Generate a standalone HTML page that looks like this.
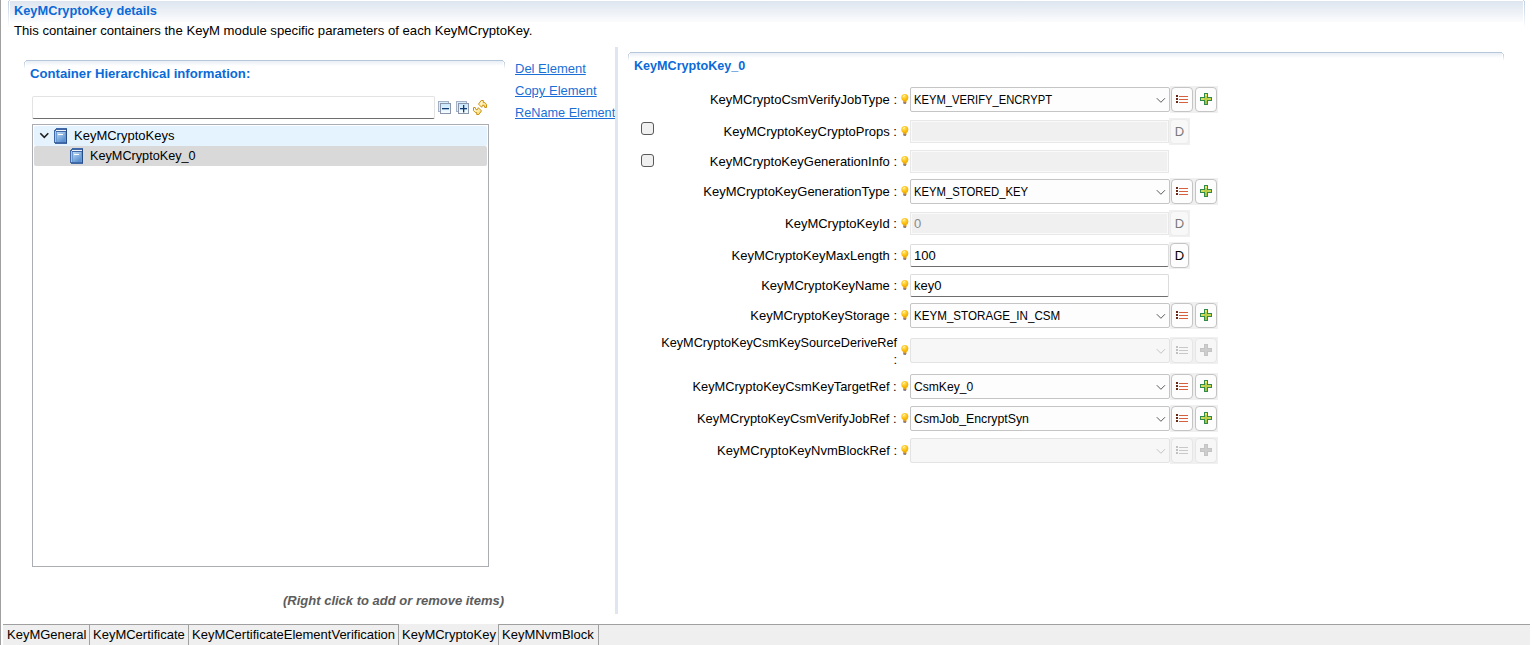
<!DOCTYPE html>
<html><head><meta charset="utf-8">
<style>
html,body{margin:0;padding:0;}
body{width:1532px;height:645px;position:relative;overflow:hidden;background:#fff;font-family:"Liberation Sans",sans-serif;font-size:13px;color:#000;}
.a{position:absolute;}
.a svg{display:block;}
.t{position:absolute;white-space:nowrap;line-height:16px;height:16px;}
.b{font-weight:bold;color:#0a6ad8;}
.lnk{color:#1a6fd6;text-decoration:underline;}
</style></head>
<body>

<div class="a" style="left:0;top:0;width:1px;height:645px;background:#a0a0a0"></div>
<div class="a" style="left:9px;top:0;width:1px;height:1px;background:#c8d4e2"></div>
<div class="a" style="left:1523px;top:0;width:1px;height:1px;background:#c8d4e2"></div>
<div class="a" style="left:8px;top:1px;width:1px;height:27px;background:linear-gradient(#c0cfe0,rgba(255,255,255,0))"></div>
<div class="a" style="left:1524px;top:1px;width:1px;height:27px;background:linear-gradient(#c0cfe0,rgba(255,255,255,0))"></div>
<div class="a" style="left:10px;top:1px;width:1513px;height:21px;background:linear-gradient(#dee5ef,#fbfcfd)"></div>
<div class="t b" style="left:14px;top:3px;font-size:12.8px">KeyMCryptoKey details</div>
<div class="t" style="left:14px;top:23px;font-size:13.15px">This container containers the KeyM module specific parameters of each KeyMCryptoKey.</div>
<div class="a" style="left:26px;top:60px;width:477px;height:1px;background:#b6c7db"></div>
<div class="a" style="left:25px;top:61px;width:1px;height:1px;background:#c4d2e2"></div>
<div class="a" style="left:503px;top:61px;width:1px;height:1px;background:#c4d2e2"></div>
<div class="a" style="left:24px;top:62px;width:1px;height:7px;background:linear-gradient(#bccbdd,rgba(255,255,255,0))"></div>
<div class="a" style="left:504px;top:62px;width:1px;height:7px;background:linear-gradient(#bccbdd,rgba(255,255,255,0))"></div>
<div class="a" style="left:26px;top:61px;width:477px;height:5px;background:linear-gradient(#e9eef5,#fff)"></div>
<div class="t b" style="left:30px;top:66px;font-size:13.13px">Container Hierarchical information:</div>
<div class="a" style="left:32px;top:96px;width:401px;height:21px;border:1px solid #e3e3e3;border-bottom:1px solid #6e6e6e;border-radius:2px;"></div>
<div class="a" style="left:438px;top:101px;width:14px;height:14px"><svg width="14" height="14" viewBox="0 0 14 14"><defs><linearGradient id="cg" x1="0" y1="0" x2="0" y2="1"><stop offset="0" stop-color="#c4e6fc"/><stop offset="1" stop-color="#fafdff"/></linearGradient></defs><rect x="0.5" y="0.5" width="10" height="10" fill="#d8eefc" stroke="#a4b0c4"/><rect x="2.5" y="2.5" width="10" height="10" fill="url(#cg)" stroke="#8a96aa"/><rect x="4" y="7" width="7" height="1.3" fill="#0f3c74"/></svg></div>
<div class="a" style="left:456px;top:101px;width:14px;height:14px"><svg width="14" height="14" viewBox="0 0 14 14"><defs><linearGradient id="cg" x1="0" y1="0" x2="0" y2="1"><stop offset="0" stop-color="#c4e6fc"/><stop offset="1" stop-color="#fafdff"/></linearGradient></defs><rect x="0.5" y="0.5" width="10" height="10" fill="#d8eefc" stroke="#a4b0c4"/><rect x="2.5" y="2.5" width="10" height="10" fill="url(#cg)" stroke="#8a96aa"/><rect x="4" y="7" width="7" height="1.3" fill="#0f3c74"/><rect x="7" y="4" width="1.3" height="7.5" fill="#0f3c74"/></svg></div>
<div class="a" style="left:472px;top:99px;width:16px;height:17px"><svg width="16" height="17" viewBox="0 0 16 17"><defs><linearGradient id="sg" x1="0" y1="0" x2="1" y2="1"><stop offset="0" stop-color="#ffffff"/><stop offset="0.5" stop-color="#fdf0b0"/><stop offset="1" stop-color="#f4cc50"/></linearGradient></defs><path d="M9.2 1.5 L11.3 1.5 L11.3 3.6 L12.8 3.6 L14.5 5.4 L14.5 8.5 L12.8 8.5 L12 6.3 L10.6 6.3 L9.7 8.3 L6.5 5.1 Z" fill="url(#sg)" stroke="#cc9010" stroke-width="1" stroke-linejoin="miter"/><path d="M6.8 15.5 L4.7 15.5 L4.7 13.4 L3.2 13.4 L1.5 11.6 L1.5 8.5 L3.2 8.5 L4 10.7 L5.4 10.7 L6.3 8.7 L9.5 11.9 Z" fill="url(#sg)" stroke="#cc9010" stroke-width="1" stroke-linejoin="miter"/></svg></div>
<div class="a" style="left:32px;top:124px;width:455px;height:441px;border:1px solid #abadb3;"></div>
<div class="a" style="left:34px;top:126px;width:453px;height:20px;background:#e5f3ff;border-radius:2px"></div>
<div class="a" style="left:34px;top:146px;width:453px;height:20px;background:#d9d9d9;border-radius:2px"></div>
<div class="a" style="left:39px;top:132px;width:11px;height:7px"><svg width="11" height="7" viewBox="0 0 11 7"><path d="M1.3 1.3 L5.3 5.3 L9.3 1.3" fill="none" stroke="#202020" stroke-width="1.6"/></svg></div>
<div class="a" style="left:54px;top:128px;width:14px;height:17px"><svg width="14" height="17" viewBox="0 0 14 17" shape-rendering="crispEdges"><defs><linearGradient id="bk" x1="0" y1="0" x2="0.6" y2="1"><stop offset="0" stop-color="#bcdaf4"/><stop offset="1" stop-color="#5a90d0"/></linearGradient></defs><path d="M2 0 H13 V15 L12 16 H1 L0 15 V2 Z" fill="#4068a6"/><rect x="2" y="2" width="10" height="1" fill="#eef4fa"/><rect x="1" y="3" width="1" height="11" fill="#a4c6ea"/><rect x="2" y="4" width="10" height="10" fill="#6a98d0"/><rect x="3" y="4" width="8" height="10" fill="url(#bk)"/><rect x="4" y="6" width="5" height="1" fill="#ffffff"/><rect x="12" y="1" width="1" height="14" fill="#2a4c84"/></svg></div>
<div class="a" style="left:70px;top:148px;width:14px;height:17px"><svg width="14" height="17" viewBox="0 0 14 17" shape-rendering="crispEdges"><defs><linearGradient id="bk" x1="0" y1="0" x2="0.6" y2="1"><stop offset="0" stop-color="#bcdaf4"/><stop offset="1" stop-color="#5a90d0"/></linearGradient></defs><path d="M2 0 H13 V15 L12 16 H1 L0 15 V2 Z" fill="#4068a6"/><rect x="2" y="2" width="10" height="1" fill="#eef4fa"/><rect x="1" y="3" width="1" height="11" fill="#a4c6ea"/><rect x="2" y="4" width="10" height="10" fill="#6a98d0"/><rect x="3" y="4" width="8" height="10" fill="url(#bk)"/><rect x="4" y="6" width="5" height="1" fill="#ffffff"/><rect x="12" y="1" width="1" height="14" fill="#2a4c84"/></svg></div>
<div class="t" style="left:74px;top:128px">KeyMCryptoKeys</div>
<div class="t" style="left:90px;top:148px;transform:scaleX(0.975);transform-origin:left">KeyMCryptoKey_0</div>
<div class="t lnk" style="left:515px;top:61px">Del Element</div>
<div class="t lnk" style="left:515px;top:83px">Copy Element</div>
<div class="a" style="left:515px;top:105px;width:100px;height:17px;overflow:hidden"><div class="t lnk" style="left:0;top:0;font-size:12.9px;transform:scaleX(0.985);transform-origin:left">ReName Element</div></div>
<div class="a" style="left:615px;top:47px;width:3px;height:567px;background:#dfe6f0"></div>
<div class="a" style="left:630px;top:52px;width:872px;height:1px;background:#b6c7db"></div>
<div class="a" style="left:629px;top:53px;width:1px;height:1px;background:#c4d2e2"></div>
<div class="a" style="left:1502px;top:53px;width:1px;height:1px;background:#c4d2e2"></div>
<div class="a" style="left:628px;top:54px;width:1px;height:7px;background:linear-gradient(#bccbdd,rgba(255,255,255,0))"></div>
<div class="a" style="left:1503px;top:54px;width:1px;height:7px;background:linear-gradient(#bccbdd,rgba(255,255,255,0))"></div>
<div class="a" style="left:630px;top:53px;width:872px;height:5px;background:linear-gradient(#e9eef5,#fff)"></div>
<div class="t b" style="left:634px;top:58px;font-size:12.6px">KeyMCryptoKey_0</div>
<div class="t" style="right:635px;top:92px">KeyMCryptoCsmVerifyJobType :</div>
<div class="a" style="left:901px;top:93px;width:9px;height:12px"><svg width="9" height="12" viewBox="0 0 9 12"><defs><radialGradient id="bg" cx="0.4" cy="0.35" r="0.7"><stop offset="0" stop-color="#ffe680"/><stop offset="0.5" stop-color="#ffc81e"/><stop offset="1" stop-color="#f0a800"/></radialGradient></defs><circle cx="3.8" cy="4.4" r="3.5" fill="url(#bg)"/><rect x="2.1" y="7" width="3.4" height="1.8" fill="#f0b000"/><rect x="2.2" y="8.6" width="3.2" height="1.6" fill="#b47a40"/><rect x="2.6" y="10.1" width="2.4" height="0.9" fill="#7a8090"/><path d="M2.3 3.8 L3.3 2.5" stroke="#fff8d0" stroke-width="0.9" stroke-linecap="round"/></svg></div>
<div class="a" style="left:910px;top:87px;width:258px;height:23px;border:1px solid #c5c5c5;border-radius:2px;background:#fdfdfd"></div>
<div class="t" style="left:914px;top:92px;transform:scaleX(0.862);transform-origin:left">KEYM_VERIFY_ENCRYPT</div>
<div class="a" style="left:1156px;top:97px;width:10px;height:7px"><svg width="10" height="7" viewBox="0 0 10 7"><path d="M0.8 1.2 L4.9 5.3 L9 1.2" fill="none" stroke="#505050" stroke-width="0.95"/></svg></div>
<div class="a" style="left:1170px;top:86px;width:48px;height:27px;background:#f0f0f0"></div>
<div class="a" style="left:1171px;top:87px;width:20px;height:23px;border:1px solid #c4c4c4;border-radius:4px;background:#fdfdfd"></div>
<div class="a" style="left:1195px;top:87px;width:20px;height:23px;border:1px solid #c4c4c4;border-radius:4px;background:#fdfdfd"></div>
<div class="a" style="left:1176px;top:95px;width:14px;height:10px"><svg width="14" height="10" viewBox="0 0 14 10"><rect x="0" y="0" width="2" height="2" fill="#6b2511"/><rect x="0" y="3" width="2" height="2" fill="#6b2511"/><rect x="0" y="6" width="2" height="2" fill="#6b2511"/><rect x="3" y="1" width="9" height="1" fill="#d4603e"/><rect x="3" y="4" width="9" height="1" fill="#d4603e"/><rect x="3" y="7" width="9" height="1" fill="#d4603e"/></svg></div>
<div class="a" style="left:1200px;top:93px;width:12px;height:12px"><svg width="12" height="12" viewBox="0 0 12 12" shape-rendering="crispEdges"><path d="M4 0 H8 V4 H12 V8 H8 V12 H4 V8 H0 V4 H4 Z" fill="#328a4a"/><path d="M5 1 H7 V5 H11 V7 H7 V11 H5 V7 H1 V5 H5 Z" fill="#b9cf4a"/><rect x="5" y="1" width="2" height="2" fill="#ece65c"/><rect x="1" y="5" width="3" height="2" fill="#d8dc58"/><rect x="8" y="5" width="3" height="2" fill="#c8d650"/><rect x="5" y="8" width="2" height="3" fill="#a4c244"/></svg></div>
<div class="a" style="left:641px;top:122px;width:11px;height:11px;border:1px solid #5a5a5a;border-radius:3px;background:#f0f0f0"></div>
<div class="t" style="right:635px;top:124px">KeyMCryptoKeyCryptoProps :</div>
<div class="a" style="left:901px;top:125px;width:9px;height:12px"><svg width="9" height="12" viewBox="0 0 9 12"><defs><radialGradient id="bg" cx="0.4" cy="0.35" r="0.7"><stop offset="0" stop-color="#ffe680"/><stop offset="0.5" stop-color="#ffc81e"/><stop offset="1" stop-color="#f0a800"/></radialGradient></defs><circle cx="3.8" cy="4.4" r="3.5" fill="url(#bg)"/><rect x="2.1" y="7" width="3.4" height="1.8" fill="#f0b000"/><rect x="2.2" y="8.6" width="3.2" height="1.6" fill="#b47a40"/><rect x="2.6" y="10.1" width="2.4" height="0.9" fill="#7a8090"/><path d="M2.3 3.8 L3.3 2.5" stroke="#fff8d0" stroke-width="0.9" stroke-linecap="round"/></svg></div>
<div class="a" style="left:910px;top:120px;width:257px;height:21px;border:1px solid #e8e8e8;background:#f0f0f0;box-shadow:inset 0 0 0 1px #fafafa"></div>
<div class="a" style="left:1169px;top:118px;width:21px;height:27px;background:#f0f0f0"></div>
<div class="a" style="left:1170px;top:119px;width:17px;height:23px;border:1px solid #ececec;border-radius:4px;background:#f8f8f8"></div>
<div class="t" style="left:1170px;width:19px;text-align:center;top:124px;color:#7a7a7a">D</div>
<div class="a" style="left:641px;top:154px;width:11px;height:11px;border:1px solid #5a5a5a;border-radius:3px;background:#f0f0f0"></div>
<div class="t" style="right:635px;top:154px">KeyMCryptoKeyGenerationInfo :</div>
<div class="a" style="left:901px;top:155px;width:9px;height:12px"><svg width="9" height="12" viewBox="0 0 9 12"><defs><radialGradient id="bg" cx="0.4" cy="0.35" r="0.7"><stop offset="0" stop-color="#ffe680"/><stop offset="0.5" stop-color="#ffc81e"/><stop offset="1" stop-color="#f0a800"/></radialGradient></defs><circle cx="3.8" cy="4.4" r="3.5" fill="url(#bg)"/><rect x="2.1" y="7" width="3.4" height="1.8" fill="#f0b000"/><rect x="2.2" y="8.6" width="3.2" height="1.6" fill="#b47a40"/><rect x="2.6" y="10.1" width="2.4" height="0.9" fill="#7a8090"/><path d="M2.3 3.8 L3.3 2.5" stroke="#fff8d0" stroke-width="0.9" stroke-linecap="round"/></svg></div>
<div class="a" style="left:910px;top:150px;width:257px;height:21px;border:1px solid #e8e8e8;background:#f0f0f0;box-shadow:inset 0 0 0 1px #fafafa"></div>
<div class="t" style="right:635px;top:184px">KeyMCryptoKeyGenerationType :</div>
<div class="a" style="left:901px;top:185px;width:9px;height:12px"><svg width="9" height="12" viewBox="0 0 9 12"><defs><radialGradient id="bg" cx="0.4" cy="0.35" r="0.7"><stop offset="0" stop-color="#ffe680"/><stop offset="0.5" stop-color="#ffc81e"/><stop offset="1" stop-color="#f0a800"/></radialGradient></defs><circle cx="3.8" cy="4.4" r="3.5" fill="url(#bg)"/><rect x="2.1" y="7" width="3.4" height="1.8" fill="#f0b000"/><rect x="2.2" y="8.6" width="3.2" height="1.6" fill="#b47a40"/><rect x="2.6" y="10.1" width="2.4" height="0.9" fill="#7a8090"/><path d="M2.3 3.8 L3.3 2.5" stroke="#fff8d0" stroke-width="0.9" stroke-linecap="round"/></svg></div>
<div class="a" style="left:910px;top:179px;width:258px;height:23px;border:1px solid #c5c5c5;border-radius:2px;background:#fdfdfd"></div>
<div class="t" style="left:914px;top:184px;transform:scaleX(0.869);transform-origin:left">KEYM_STORED_KEY</div>
<div class="a" style="left:1156px;top:189px;width:10px;height:7px"><svg width="10" height="7" viewBox="0 0 10 7"><path d="M0.8 1.2 L4.9 5.3 L9 1.2" fill="none" stroke="#505050" stroke-width="0.95"/></svg></div>
<div class="a" style="left:1170px;top:178px;width:48px;height:27px;background:#f0f0f0"></div>
<div class="a" style="left:1171px;top:179px;width:20px;height:23px;border:1px solid #c4c4c4;border-radius:4px;background:#fdfdfd"></div>
<div class="a" style="left:1195px;top:179px;width:20px;height:23px;border:1px solid #c4c4c4;border-radius:4px;background:#fdfdfd"></div>
<div class="a" style="left:1176px;top:187px;width:14px;height:10px"><svg width="14" height="10" viewBox="0 0 14 10"><rect x="0" y="0" width="2" height="2" fill="#6b2511"/><rect x="0" y="3" width="2" height="2" fill="#6b2511"/><rect x="0" y="6" width="2" height="2" fill="#6b2511"/><rect x="3" y="1" width="9" height="1" fill="#d4603e"/><rect x="3" y="4" width="9" height="1" fill="#d4603e"/><rect x="3" y="7" width="9" height="1" fill="#d4603e"/></svg></div>
<div class="a" style="left:1200px;top:185px;width:12px;height:12px"><svg width="12" height="12" viewBox="0 0 12 12" shape-rendering="crispEdges"><path d="M4 0 H8 V4 H12 V8 H8 V12 H4 V8 H0 V4 H4 Z" fill="#328a4a"/><path d="M5 1 H7 V5 H11 V7 H7 V11 H5 V7 H1 V5 H5 Z" fill="#b9cf4a"/><rect x="5" y="1" width="2" height="2" fill="#ece65c"/><rect x="1" y="5" width="3" height="2" fill="#d8dc58"/><rect x="8" y="5" width="3" height="2" fill="#c8d650"/><rect x="5" y="8" width="2" height="3" fill="#a4c244"/></svg></div>
<div class="t" style="right:635px;top:216px">KeyMCryptoKeyId :</div>
<div class="a" style="left:901px;top:217px;width:9px;height:12px"><svg width="9" height="12" viewBox="0 0 9 12"><defs><radialGradient id="bg" cx="0.4" cy="0.35" r="0.7"><stop offset="0" stop-color="#ffe680"/><stop offset="0.5" stop-color="#ffc81e"/><stop offset="1" stop-color="#f0a800"/></radialGradient></defs><circle cx="3.8" cy="4.4" r="3.5" fill="url(#bg)"/><rect x="2.1" y="7" width="3.4" height="1.8" fill="#f0b000"/><rect x="2.2" y="8.6" width="3.2" height="1.6" fill="#b47a40"/><rect x="2.6" y="10.1" width="2.4" height="0.9" fill="#7a8090"/><path d="M2.3 3.8 L3.3 2.5" stroke="#fff8d0" stroke-width="0.9" stroke-linecap="round"/></svg></div>
<div class="a" style="left:910px;top:212px;width:257px;height:21px;border:1px solid #e8e8e8;background:#f0f0f0;box-shadow:inset 0 0 0 1px #fafafa"></div>
<div class="t" style="left:914px;top:216px;color:#8a8a8a">0</div>
<div class="a" style="left:1169px;top:210px;width:21px;height:27px;background:#f0f0f0"></div>
<div class="a" style="left:1170px;top:211px;width:17px;height:23px;border:1px solid #ececec;border-radius:4px;background:#f8f8f8"></div>
<div class="t" style="left:1170px;width:19px;text-align:center;top:216px;color:#7a7a7a">D</div>
<div class="t" style="right:635px;top:248px">KeyMCryptoKeyMaxLength :</div>
<div class="a" style="left:901px;top:249px;width:9px;height:12px"><svg width="9" height="12" viewBox="0 0 9 12"><defs><radialGradient id="bg" cx="0.4" cy="0.35" r="0.7"><stop offset="0" stop-color="#ffe680"/><stop offset="0.5" stop-color="#ffc81e"/><stop offset="1" stop-color="#f0a800"/></radialGradient></defs><circle cx="3.8" cy="4.4" r="3.5" fill="url(#bg)"/><rect x="2.1" y="7" width="3.4" height="1.8" fill="#f0b000"/><rect x="2.2" y="8.6" width="3.2" height="1.6" fill="#b47a40"/><rect x="2.6" y="10.1" width="2.4" height="0.9" fill="#7a8090"/><path d="M2.3 3.8 L3.3 2.5" stroke="#fff8d0" stroke-width="0.9" stroke-linecap="round"/></svg></div>
<div class="a" style="left:910px;top:244px;width:257px;height:21px;border:1px solid #dcdcdc;border-bottom-color:#6e6e6e;border-radius:2px;background:#fff"></div>
<div class="t" style="left:914px;top:248px;color:#000">100</div>
<div class="a" style="left:1169px;top:242px;width:21px;height:27px;background:#f0f0f0"></div>
<div class="a" style="left:1170px;top:243px;width:17px;height:23px;border:1px solid #c4c4c4;border-radius:4px;background:#fdfdfd"></div>
<div class="t" style="left:1170px;width:19px;text-align:center;top:248px">D</div>
<div class="t" style="right:635px;top:278px">KeyMCryptoKeyName :</div>
<div class="a" style="left:901px;top:279px;width:9px;height:12px"><svg width="9" height="12" viewBox="0 0 9 12"><defs><radialGradient id="bg" cx="0.4" cy="0.35" r="0.7"><stop offset="0" stop-color="#ffe680"/><stop offset="0.5" stop-color="#ffc81e"/><stop offset="1" stop-color="#f0a800"/></radialGradient></defs><circle cx="3.8" cy="4.4" r="3.5" fill="url(#bg)"/><rect x="2.1" y="7" width="3.4" height="1.8" fill="#f0b000"/><rect x="2.2" y="8.6" width="3.2" height="1.6" fill="#b47a40"/><rect x="2.6" y="10.1" width="2.4" height="0.9" fill="#7a8090"/><path d="M2.3 3.8 L3.3 2.5" stroke="#fff8d0" stroke-width="0.9" stroke-linecap="round"/></svg></div>
<div class="a" style="left:910px;top:274px;width:257px;height:21px;border:1px solid #dcdcdc;border-bottom-color:#6e6e6e;border-radius:2px;background:#fff"></div>
<div class="t" style="left:914px;top:278px;color:#000">key0</div>
<div class="t" style="right:635px;top:308px">KeyMCryptoKeyStorage :</div>
<div class="a" style="left:901px;top:309px;width:9px;height:12px"><svg width="9" height="12" viewBox="0 0 9 12"><defs><radialGradient id="bg" cx="0.4" cy="0.35" r="0.7"><stop offset="0" stop-color="#ffe680"/><stop offset="0.5" stop-color="#ffc81e"/><stop offset="1" stop-color="#f0a800"/></radialGradient></defs><circle cx="3.8" cy="4.4" r="3.5" fill="url(#bg)"/><rect x="2.1" y="7" width="3.4" height="1.8" fill="#f0b000"/><rect x="2.2" y="8.6" width="3.2" height="1.6" fill="#b47a40"/><rect x="2.6" y="10.1" width="2.4" height="0.9" fill="#7a8090"/><path d="M2.3 3.8 L3.3 2.5" stroke="#fff8d0" stroke-width="0.9" stroke-linecap="round"/></svg></div>
<div class="a" style="left:910px;top:303px;width:258px;height:23px;border:1px solid #c5c5c5;border-radius:2px;background:#fdfdfd"></div>
<div class="t" style="left:914px;top:308px;transform:scaleX(0.893);transform-origin:left">KEYM_STORAGE_IN_CSM</div>
<div class="a" style="left:1156px;top:313px;width:10px;height:7px"><svg width="10" height="7" viewBox="0 0 10 7"><path d="M0.8 1.2 L4.9 5.3 L9 1.2" fill="none" stroke="#505050" stroke-width="0.95"/></svg></div>
<div class="a" style="left:1170px;top:302px;width:48px;height:27px;background:#f0f0f0"></div>
<div class="a" style="left:1171px;top:303px;width:20px;height:23px;border:1px solid #c4c4c4;border-radius:4px;background:#fdfdfd"></div>
<div class="a" style="left:1195px;top:303px;width:20px;height:23px;border:1px solid #c4c4c4;border-radius:4px;background:#fdfdfd"></div>
<div class="a" style="left:1176px;top:311px;width:14px;height:10px"><svg width="14" height="10" viewBox="0 0 14 10"><rect x="0" y="0" width="2" height="2" fill="#6b2511"/><rect x="0" y="3" width="2" height="2" fill="#6b2511"/><rect x="0" y="6" width="2" height="2" fill="#6b2511"/><rect x="3" y="1" width="9" height="1" fill="#d4603e"/><rect x="3" y="4" width="9" height="1" fill="#d4603e"/><rect x="3" y="7" width="9" height="1" fill="#d4603e"/></svg></div>
<div class="a" style="left:1200px;top:309px;width:12px;height:12px"><svg width="12" height="12" viewBox="0 0 12 12" shape-rendering="crispEdges"><path d="M4 0 H8 V4 H12 V8 H8 V12 H4 V8 H0 V4 H4 Z" fill="#328a4a"/><path d="M5 1 H7 V5 H11 V7 H7 V11 H5 V7 H1 V5 H5 Z" fill="#b9cf4a"/><rect x="5" y="1" width="2" height="2" fill="#ece65c"/><rect x="1" y="5" width="3" height="2" fill="#d8dc58"/><rect x="8" y="5" width="3" height="2" fill="#c8d650"/><rect x="5" y="8" width="2" height="3" fill="#a4c244"/></svg></div>
<div class="t" style="right:635px;top:335px;transform:scaleX(0.974);transform-origin:right">KeyMCryptoKeyCsmKeySourceDeriveRef</div>
<div class="t" style="right:635px;top:352px">:</div>
<div class="a" style="left:901px;top:344px;width:9px;height:12px"><svg width="9" height="12" viewBox="0 0 9 12"><defs><radialGradient id="bg" cx="0.4" cy="0.35" r="0.7"><stop offset="0" stop-color="#ffe680"/><stop offset="0.5" stop-color="#ffc81e"/><stop offset="1" stop-color="#f0a800"/></radialGradient></defs><circle cx="3.8" cy="4.4" r="3.5" fill="url(#bg)"/><rect x="2.1" y="7" width="3.4" height="1.8" fill="#f0b000"/><rect x="2.2" y="8.6" width="3.2" height="1.6" fill="#b47a40"/><rect x="2.6" y="10.1" width="2.4" height="0.9" fill="#7a8090"/><path d="M2.3 3.8 L3.3 2.5" stroke="#fff8d0" stroke-width="0.9" stroke-linecap="round"/></svg></div>
<div class="a" style="left:910px;top:338px;width:258px;height:23px;border:1px solid #e3e3e3;border-radius:2px;background:#f7f7f7"></div>
<div class="a" style="left:1156px;top:348px;width:10px;height:7px"><svg width="10" height="7" viewBox="0 0 10 7"><path d="M0.8 1.2 L4.9 5.3 L9 1.2" fill="none" stroke="#c0c0c0" stroke-width="0.95"/></svg></div>
<div class="a" style="left:1170px;top:337px;width:48px;height:27px;background:#f0f0f0"></div>
<div class="a" style="left:1171px;top:338px;width:20px;height:23px;border:1px solid #e6e6e6;border-radius:4px;background:#f7f7f7"></div>
<div class="a" style="left:1195px;top:338px;width:20px;height:23px;border:1px solid #e6e6e6;border-radius:4px;background:#f7f7f7"></div>
<div class="a" style="left:1176px;top:346px;width:14px;height:10px"><svg width="14" height="10" viewBox="0 0 14 10"><rect x="0" y="0" width="2" height="2" fill="#c0c0c0"/><rect x="0" y="3" width="2" height="2" fill="#c0c0c0"/><rect x="0" y="6" width="2" height="2" fill="#c0c0c0"/><rect x="3" y="1" width="9" height="1" fill="#c8c8c8"/><rect x="3" y="4" width="9" height="1" fill="#c8c8c8"/><rect x="3" y="7" width="9" height="1" fill="#c8c8c8"/></svg></div>
<div class="a" style="left:1200px;top:344px;width:12px;height:12px"><svg width="12" height="12" viewBox="0 0 12 12" shape-rendering="crispEdges"><path d="M4 0 H8 V4 H12 V8 H8 V12 H4 V8 H0 V4 H4 Z" fill="#c4c4c4"/><path d="M5 1 H7 V5 H11 V7 H7 V11 H5 V7 H1 V5 H5 Z" fill="#cdcdcd"/></svg></div>
<div class="t" style="right:635px;top:379px;transform:scaleX(0.988);transform-origin:right">KeyMCryptoKeyCsmKeyTargetRef :</div>
<div class="a" style="left:901px;top:380px;width:9px;height:12px"><svg width="9" height="12" viewBox="0 0 9 12"><defs><radialGradient id="bg" cx="0.4" cy="0.35" r="0.7"><stop offset="0" stop-color="#ffe680"/><stop offset="0.5" stop-color="#ffc81e"/><stop offset="1" stop-color="#f0a800"/></radialGradient></defs><circle cx="3.8" cy="4.4" r="3.5" fill="url(#bg)"/><rect x="2.1" y="7" width="3.4" height="1.8" fill="#f0b000"/><rect x="2.2" y="8.6" width="3.2" height="1.6" fill="#b47a40"/><rect x="2.6" y="10.1" width="2.4" height="0.9" fill="#7a8090"/><path d="M2.3 3.8 L3.3 2.5" stroke="#fff8d0" stroke-width="0.9" stroke-linecap="round"/></svg></div>
<div class="a" style="left:910px;top:374px;width:258px;height:23px;border:1px solid #c5c5c5;border-radius:2px;background:#fdfdfd"></div>
<div class="t" style="left:914px;top:379px;transform:scaleX(0.93);transform-origin:left">CsmKey_0</div>
<div class="a" style="left:1156px;top:384px;width:10px;height:7px"><svg width="10" height="7" viewBox="0 0 10 7"><path d="M0.8 1.2 L4.9 5.3 L9 1.2" fill="none" stroke="#505050" stroke-width="0.95"/></svg></div>
<div class="a" style="left:1170px;top:373px;width:48px;height:27px;background:#f0f0f0"></div>
<div class="a" style="left:1171px;top:374px;width:20px;height:23px;border:1px solid #c4c4c4;border-radius:4px;background:#fdfdfd"></div>
<div class="a" style="left:1195px;top:374px;width:20px;height:23px;border:1px solid #c4c4c4;border-radius:4px;background:#fdfdfd"></div>
<div class="a" style="left:1176px;top:382px;width:14px;height:10px"><svg width="14" height="10" viewBox="0 0 14 10"><rect x="0" y="0" width="2" height="2" fill="#6b2511"/><rect x="0" y="3" width="2" height="2" fill="#6b2511"/><rect x="0" y="6" width="2" height="2" fill="#6b2511"/><rect x="3" y="1" width="9" height="1" fill="#d4603e"/><rect x="3" y="4" width="9" height="1" fill="#d4603e"/><rect x="3" y="7" width="9" height="1" fill="#d4603e"/></svg></div>
<div class="a" style="left:1200px;top:380px;width:12px;height:12px"><svg width="12" height="12" viewBox="0 0 12 12" shape-rendering="crispEdges"><path d="M4 0 H8 V4 H12 V8 H8 V12 H4 V8 H0 V4 H4 Z" fill="#328a4a"/><path d="M5 1 H7 V5 H11 V7 H7 V11 H5 V7 H1 V5 H5 Z" fill="#b9cf4a"/><rect x="5" y="1" width="2" height="2" fill="#ece65c"/><rect x="1" y="5" width="3" height="2" fill="#d8dc58"/><rect x="8" y="5" width="3" height="2" fill="#c8d650"/><rect x="5" y="8" width="2" height="3" fill="#a4c244"/></svg></div>
<div class="t" style="right:635px;top:411px;transform:scaleX(0.99);transform-origin:right">KeyMCryptoKeyCsmVerifyJobRef :</div>
<div class="a" style="left:901px;top:412px;width:9px;height:12px"><svg width="9" height="12" viewBox="0 0 9 12"><defs><radialGradient id="bg" cx="0.4" cy="0.35" r="0.7"><stop offset="0" stop-color="#ffe680"/><stop offset="0.5" stop-color="#ffc81e"/><stop offset="1" stop-color="#f0a800"/></radialGradient></defs><circle cx="3.8" cy="4.4" r="3.5" fill="url(#bg)"/><rect x="2.1" y="7" width="3.4" height="1.8" fill="#f0b000"/><rect x="2.2" y="8.6" width="3.2" height="1.6" fill="#b47a40"/><rect x="2.6" y="10.1" width="2.4" height="0.9" fill="#7a8090"/><path d="M2.3 3.8 L3.3 2.5" stroke="#fff8d0" stroke-width="0.9" stroke-linecap="round"/></svg></div>
<div class="a" style="left:910px;top:406px;width:258px;height:23px;border:1px solid #c5c5c5;border-radius:2px;background:#fdfdfd"></div>
<div class="t" style="left:914px;top:411px;transform:scaleX(0.947);transform-origin:left">CsmJob_EncryptSyn</div>
<div class="a" style="left:1156px;top:416px;width:10px;height:7px"><svg width="10" height="7" viewBox="0 0 10 7"><path d="M0.8 1.2 L4.9 5.3 L9 1.2" fill="none" stroke="#505050" stroke-width="0.95"/></svg></div>
<div class="a" style="left:1170px;top:405px;width:48px;height:27px;background:#f0f0f0"></div>
<div class="a" style="left:1171px;top:406px;width:20px;height:23px;border:1px solid #c4c4c4;border-radius:4px;background:#fdfdfd"></div>
<div class="a" style="left:1195px;top:406px;width:20px;height:23px;border:1px solid #c4c4c4;border-radius:4px;background:#fdfdfd"></div>
<div class="a" style="left:1176px;top:414px;width:14px;height:10px"><svg width="14" height="10" viewBox="0 0 14 10"><rect x="0" y="0" width="2" height="2" fill="#6b2511"/><rect x="0" y="3" width="2" height="2" fill="#6b2511"/><rect x="0" y="6" width="2" height="2" fill="#6b2511"/><rect x="3" y="1" width="9" height="1" fill="#d4603e"/><rect x="3" y="4" width="9" height="1" fill="#d4603e"/><rect x="3" y="7" width="9" height="1" fill="#d4603e"/></svg></div>
<div class="a" style="left:1200px;top:412px;width:12px;height:12px"><svg width="12" height="12" viewBox="0 0 12 12" shape-rendering="crispEdges"><path d="M4 0 H8 V4 H12 V8 H8 V12 H4 V8 H0 V4 H4 Z" fill="#328a4a"/><path d="M5 1 H7 V5 H11 V7 H7 V11 H5 V7 H1 V5 H5 Z" fill="#b9cf4a"/><rect x="5" y="1" width="2" height="2" fill="#ece65c"/><rect x="1" y="5" width="3" height="2" fill="#d8dc58"/><rect x="8" y="5" width="3" height="2" fill="#c8d650"/><rect x="5" y="8" width="2" height="3" fill="#a4c244"/></svg></div>
<div class="t" style="right:635px;top:443px">KeyMCryptoKeyNvmBlockRef :</div>
<div class="a" style="left:901px;top:444px;width:9px;height:12px"><svg width="9" height="12" viewBox="0 0 9 12"><defs><radialGradient id="bg" cx="0.4" cy="0.35" r="0.7"><stop offset="0" stop-color="#ffe680"/><stop offset="0.5" stop-color="#ffc81e"/><stop offset="1" stop-color="#f0a800"/></radialGradient></defs><circle cx="3.8" cy="4.4" r="3.5" fill="url(#bg)"/><rect x="2.1" y="7" width="3.4" height="1.8" fill="#f0b000"/><rect x="2.2" y="8.6" width="3.2" height="1.6" fill="#b47a40"/><rect x="2.6" y="10.1" width="2.4" height="0.9" fill="#7a8090"/><path d="M2.3 3.8 L3.3 2.5" stroke="#fff8d0" stroke-width="0.9" stroke-linecap="round"/></svg></div>
<div class="a" style="left:910px;top:438px;width:258px;height:23px;border:1px solid #e3e3e3;border-radius:2px;background:#f7f7f7"></div>
<div class="a" style="left:1156px;top:448px;width:10px;height:7px"><svg width="10" height="7" viewBox="0 0 10 7"><path d="M0.8 1.2 L4.9 5.3 L9 1.2" fill="none" stroke="#c0c0c0" stroke-width="0.95"/></svg></div>
<div class="a" style="left:1170px;top:437px;width:48px;height:27px;background:#f0f0f0"></div>
<div class="a" style="left:1171px;top:438px;width:20px;height:23px;border:1px solid #e6e6e6;border-radius:4px;background:#f7f7f7"></div>
<div class="a" style="left:1195px;top:438px;width:20px;height:23px;border:1px solid #e6e6e6;border-radius:4px;background:#f7f7f7"></div>
<div class="a" style="left:1176px;top:446px;width:14px;height:10px"><svg width="14" height="10" viewBox="0 0 14 10"><rect x="0" y="0" width="2" height="2" fill="#c0c0c0"/><rect x="0" y="3" width="2" height="2" fill="#c0c0c0"/><rect x="0" y="6" width="2" height="2" fill="#c0c0c0"/><rect x="3" y="1" width="9" height="1" fill="#c8c8c8"/><rect x="3" y="4" width="9" height="1" fill="#c8c8c8"/><rect x="3" y="7" width="9" height="1" fill="#c8c8c8"/></svg></div>
<div class="a" style="left:1200px;top:444px;width:12px;height:12px"><svg width="12" height="12" viewBox="0 0 12 12" shape-rendering="crispEdges"><path d="M4 0 H8 V4 H12 V8 H8 V12 H4 V8 H0 V4 H4 Z" fill="#c4c4c4"/><path d="M5 1 H7 V5 H11 V7 H7 V11 H5 V7 H1 V5 H5 Z" fill="#cdcdcd"/></svg></div>
<div class="t" style="left:283px;top:593px;font-weight:bold;font-style:italic;color:#5c5c5c">(Right click to add or remove items)</div>
<div class="a" style="left:3px;top:624px;width:1527px;height:21px;background:#efefef;border-top:1px solid #a0a0a0"></div>
<div class="a" style="left:89px;top:625px;width:1px;height:20px;background:#a0a0a0"></div>
<div class="t" style="left:7px;top:627px">KeyMGeneral</div>
<div class="a" style="left:188px;top:625px;width:1px;height:20px;background:#a0a0a0"></div>
<div class="t" style="left:93px;top:627px">KeyMCertificate</div>
<div class="a" style="left:398px;top:625px;width:1px;height:20px;background:#a0a0a0"></div>
<div class="t" style="left:192px;top:627px">KeyMCertificateElementVerification</div>
<div class="a" style="left:498px;top:625px;width:1px;height:20px;background:#a0a0a0"></div>
<div class="t" style="left:402px;top:627px">KeyMCryptoKey</div>
<div class="a" style="left:598px;top:625px;width:1px;height:20px;background:#a0a0a0"></div>
<div class="t" style="left:502px;top:627px">KeyMNvmBlock</div>
<div class="a" style="left:399px;top:624px;width:99px;height:1px;background:#efefef"></div>
<div class="a" style="left:398px;top:624px;width:1px;height:21px;background:#a0a0a0"></div>
</body></html>
